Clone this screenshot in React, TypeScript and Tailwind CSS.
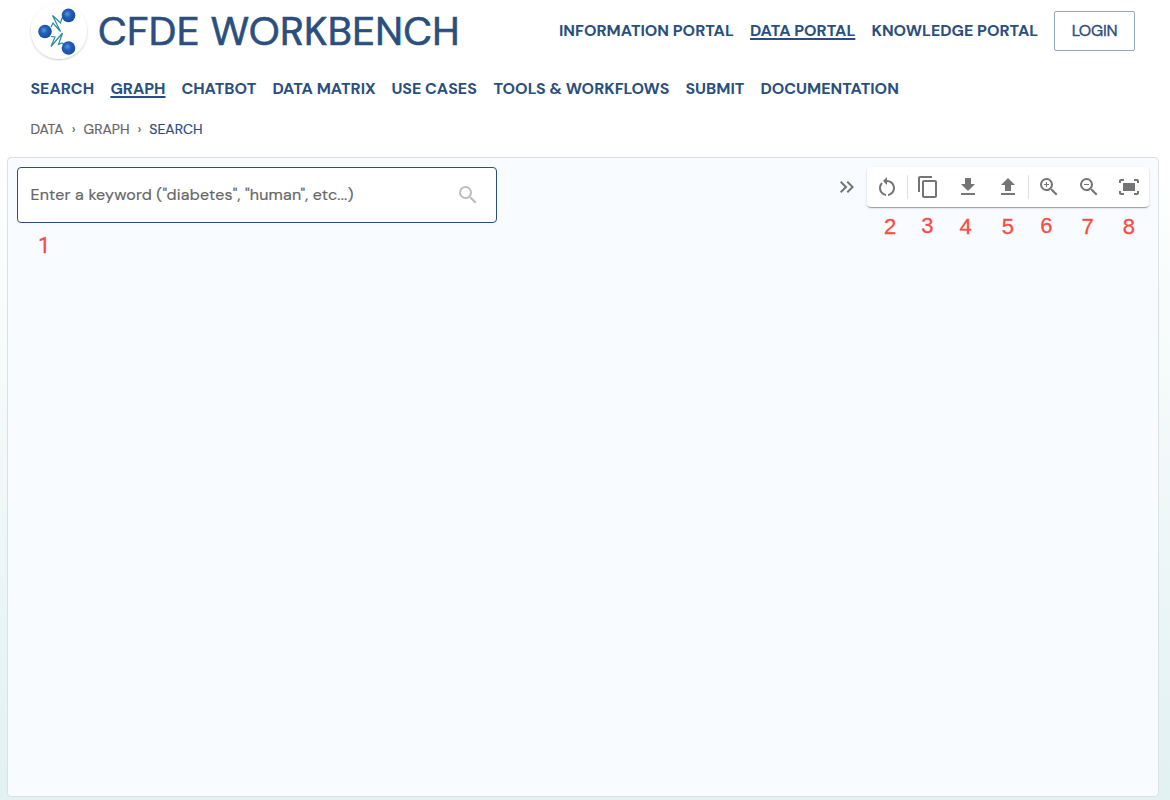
import { MdContentCopy, MdFileDownload, MdFileUpload, MdFitScreen, MdKeyboardDoubleArrowRight, MdRestartAlt, MdSearch, MdZoomIn, MdZoomOut } from "react-icons/md";

const portals = [
  { label: "INFORMATION PORTAL", width: "w-[175px]", active: false },
  { label: "DATA PORTAL", width: "w-[105.5px]", active: true },
  { label: "KNOWLEDGE PORTAL", width: "w-[166.5px]", active: false },
];

const sections = [
  { label: "SEARCH", width: "w-16", active: false },
  { label: "GRAPH", width: "w-[55px]", active: true },
  { label: "CHATBOT", width: "w-[75px]", active: false },
  { label: "DATA MATRIX", width: "w-[103px]", active: false },
  { label: "USE CASES", width: "w-[86px]", active: false },
  { label: "TOOLS & WORKFLOWS", width: "w-44", active: false },
  { label: "SUBMIT", width: "w-[59px]", active: false },
  { label: "DOCUMENTATION", width: "w-[139px]", active: false },
];

const toolGroups = [
  [{ name: "Reset", Icon: MdRestartAlt, step: "2", nudge: "pl-1.5 pt-px" }],
  [
    { name: "Copy", Icon: MdContentCopy, step: "3", nudge: "pl-0" },
    { name: "Download", Icon: MdFileDownload, step: "4", nudge: "pr-1 pt-px" },
    { name: "Upload", Icon: MdFileUpload, step: "5", nudge: "pt-px" },
  ],
  [
    { name: "Zoom in", Icon: MdZoomIn, step: "6", nudge: "pr-1" },
    { name: "Zoom out", Icon: MdZoomOut, step: "7", nudge: "pr-0.5 pt-px" },
    { name: "Fit", Icon: MdFitScreen, step: "8", nudge: "pt-px" },
  ],
];

function Logo() {
  return (
    <svg className="size-[60px] shrink-0" viewBox="0 0 60 60" aria-label="CFDE">
      <defs>
        <radialGradient id="ball" cx="0.42" cy="0.4" r="0.6">
          <stop offset="0" stopColor="#5b96dc" />
          <stop offset="0.45" stopColor="#1f5fb8" />
          <stop offset="1" stopColor="#1a4c9c" />
        </radialGradient>
        <filter id="lift" x="-20%" y="-20%" width="140%" height="140%">
          <feDropShadow dx="0" dy="1" stdDeviation="1.3" floodColor="#000" floodOpacity="0.22" />
        </filter>
      </defs>
      <circle cx="30" cy="30" r="28" fill="#fff" filter="url(#lift)" />
      <g fill="none" stroke="#2d8c9c" strokeWidth="1.2" strokeLinejoin="miter">
        <path d="M22 26 L24 22 L31.5 30.5 L23.5 14.5 L31.5 22 L33 17 L36 17" />
        <path d="M22 35.5 L26 36 L22 45.5 L33.5 32 L29.5 43.5 L33 42 L37 45" />
      </g>
      <g fill="url(#ball)">
        <circle cx="39.5" cy="14.4" r="6.8" />
        <circle cx="16" cy="30.5" r="6.8" />
        <circle cx="39.5" cy="47" r="6.8" />
      </g>
    </svg>
  );
}

function NavLink({ label, width, active }: { label: string; width: string; active: boolean }) {
  return (
    <a
      className={`${width} shrink-0 whitespace-nowrap text-[16px] leading-6 font-bold ${
        active ? "underline decoration-2 underline-offset-2" : ""
      }`}
    >
      {label}
    </a>
  );
}

export default function App() {
  return (
    <div className="flex h-[800px] w-[1170px] flex-col overflow-hidden bg-linear-to-b from-white from-20% to-[#e2f1f2] font-['DM_Sans',Inter,sans-serif] text-[#2a4f7e]">
      <header className="flex h-[62px] shrink-0 items-center pr-[35px] pl-[29px]">
        <Logo />
        <h1 className="ml-[9px] text-[40px] leading-[62px] tracking-[0.35px] whitespace-nowrap [-webkit-text-stroke:0.7px_#2a4f7e]">
          CFDE WORKBENCH
        </h1>
        <nav className="ml-auto flex items-center gap-4">
          {portals.map((p) => (
            <NavLink key={p.label} {...p} />
          ))}
          <button className="h-10 w-[81px] rounded-[2px] border border-[#96a7c0] text-[16px] tracking-[-0.2px] [-webkit-text-stroke:0.35px_#2a4f7e]">
            LOGIN
          </button>
        </nav>
      </header>

      <nav className="flex h-[54px] shrink-0 items-center gap-4 pl-[30.4px]">
        {sections.map((s) => (
          <NavLink key={s.label} {...s} />
        ))}
      </nav>

      <div className="flex h-[41px] shrink-0 gap-2 pt-[3px] pl-[30.5px] text-[14px] leading-5 text-[#666] [-webkit-text-stroke:0.2px]">
        <span>DATA</span>
        <span>›</span>
        <span>GRAPH</span>
        <span>›</span>
        <span className="text-[#2a4f7e]">SEARCH</span>
      </div>

      <main className="ml-[7px] flex h-[640px] w-[1152px] shrink-0 items-start justify-between rounded-[4px] border border-[#dcdfe3] bg-[#f8fbff] px-[9px] pt-[9px]">
        <div>
          <div className="flex h-14 w-[480px] items-center justify-between rounded-[4px] border border-[#2a4f7e] bg-white pr-4 pl-[12.5px]">
            <span className="text-[16px] tracking-[0.18px] whitespace-nowrap text-[#666] [-webkit-text-stroke:0.2px]">
              Enter a keyword ("diabetes", "human", etc...)
            </span>
            <MdSearch className="size-6 text-[#bdbdbd]" />
          </div>
          <p className="mt-[11px] ml-[21px] font-[Roboto,sans-serif] text-[22px] leading-6 text-[#fb4b43] [-webkit-text-stroke:0.3px]">1</p>
        </div>

        <div className="flex">
          <div className="flex size-10 items-center justify-center">
            <MdKeyboardDoubleArrowRight className="size-6 text-[#757575]" />
          </div>
          <div>
            <div className="flex h-10 items-center rounded-[4px] bg-white shadow-[0_2px_1px_-1px_rgba(0,0,0,0.2),0_1px_1px_rgba(0,0,0,0.14),0_1px_3px_rgba(0,0,0,0.12)]">
              {toolGroups.map((group, i) => (
                <div key={i} className={`flex h-6 items-center ${i > 0 ? "border-l border-[#e0e0e0]" : ""}`}>
                  {group.map(({ name, Icon }) => (
                    <button key={name} aria-label={name} className="flex w-10 items-center justify-center">
                      <Icon className="size-6 text-[#757575]" />
                    </button>
                  ))}
                </div>
              ))}
            </div>
            <div className="flex justify-between pt-[7px] font-['Liberation_Sans',sans-serif] text-[22px] leading-6 text-[#fb4b43] [-webkit-text-stroke:0.3px]">
              {toolGroups.flat().map(({ step, nudge }) => (
                <span key={step} className={`w-10 text-center ${nudge}`}>
                  {step}
                </span>
              ))}
            </div>
          </div>
        </div>
      </main>
    </div>
  );
}
